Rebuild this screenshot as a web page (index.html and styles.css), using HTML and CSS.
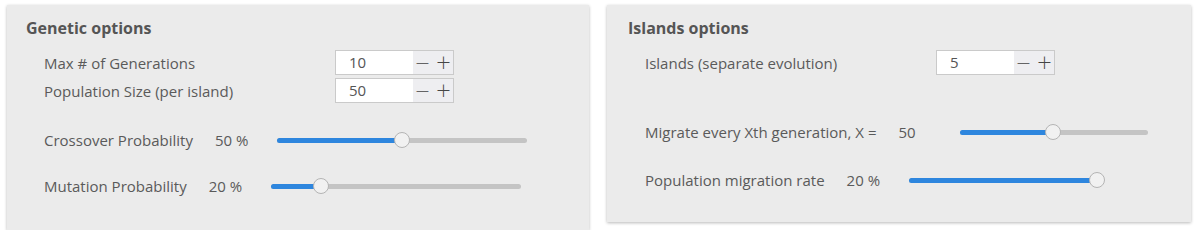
FILE: index.html
```html
<!DOCTYPE html>
<html>
<head>
<meta charset="utf-8">
<link rel="stylesheet" href="styles.css">
</head>
<body>
<div class="wrap">
  <section class="panel panel-left">
    <h2 class="title">Genetic options</h2>
    <div class="num-row">
      <span class="label">Max # of Generations</span>
      <div class="spin"><span class="spin-val">10</span><span class="spin-btns"><span class="btn">−</span><span class="btn">+</span></span></div>
    </div>
    <div class="num-row row-tight">
      <span class="label">Population Size (per island)</span>
      <div class="spin"><span class="spin-val">50</span><span class="spin-btns"><span class="btn">−</span><span class="btn">+</span></span></div>
    </div>
    <div class="slide-row sr-first-left">
      <span class="slabel">Crossover Probability</span>
      <span class="sval">50 %</span>
      <div class="slider s-wide"><div class="fill" style="width:50%"></div><div class="thumb" style="left:50%"></div></div>
    </div>
    <div class="slide-row sr-next-left">
      <span class="slabel">Mutation Probability</span>
      <span class="sval">20 %</span>
      <div class="slider s-wide"><div class="fill" style="width:20%"></div><div class="thumb" style="left:20%"></div></div>
    </div>
  </section>
  <section class="panel panel-right">
    <h2 class="title">Islands options</h2>
    <div class="num-row">
      <span class="label">Islands (separate evolution)</span>
      <div class="spin"><span class="spin-val">5</span><span class="spin-btns"><span class="btn">−</span><span class="btn">+</span></span></div>
    </div>
    <div class="slide-row sr-first-right">
      <span class="slabel">Migrate every Xth generation, X =</span>
      <span class="sval">50</span>
      <div class="slider s-narrow"><div class="fill" style="width:49%"></div><div class="thumb" style="left:49%"></div></div>
    </div>
    <div class="slide-row sr-next-right">
      <span class="slabel">Population migration rate</span>
      <span class="sval">20 %</span>
      <div class="slider s-narrow"><div class="fill" style="width:100%"></div><div class="thumb" style="left:100%"></div></div>
    </div>
  </section>
</div>
</body>
</html>
```
FILE: styles.css
```css
html, body {
  margin: 0;
  padding: 0;
  background: #ffffff;
}
body {
  font-family: "Open Sans", "Liberation Sans", sans-serif;
  color: #5a5a5a;
}
.wrap {
  display: flex;
  align-items: flex-start;
  gap: 18px;
  padding: 5px 7px 0 7px;
}
.panel {
  flex: 1 1 0;
  background: #ebebeb;
  box-shadow: 0 1px 3px rgba(0, 0, 0, 0.28);
  padding: 12px 19px 29px 19px;
  box-sizing: border-box;
}
.panel-right {
  padding-left: 21px;
  padding-bottom: 27px;
}
.title {
  margin: 0;
  font-size: 16px;
  line-height: 22px;
  font-weight: 700;
  color: #555555;
}
.num-row {
  display: flex;
  align-items: center;
  height: 25px;
  margin-top: 11px;
  padding-left: 18px;
}
.panel-right .num-row {
  padding-left: 17px;
}
.row-tight {
  margin-top: 3px;
}
.label {
  width: 291px;
  font-size: 15px;
  line-height: 20px;
}
.spin {
  display: flex;
  width: 119px;
  height: 25px;
  box-sizing: border-box;
  border: 1px solid #cacaca;
  background: #ffffff;
}
.spin-val {
  width: 77px;
  box-sizing: border-box;
  padding-left: 13px;
  font-size: 15px;
  line-height: 23px;
  color: #555555;
}
.spin-btns {
  flex: 1;
  display: flex;
  align-items: center;
  justify-content: center;
  gap: 5px;
  background: #eeeef1;
}
.btn {
  font-size: 19px;
  line-height: 23px;
  color: #454545;
  font-family: "DejaVu Sans", sans-serif;
  font-weight: 300;
}
.slide-row {
  display: flex;
  align-items: center;
  height: 30px;
  padding-left: 18px;
}
.panel-right .slide-row {
  padding-left: 17px;
}
.sr-first-left { margin-top: 22px; }
.sr-next-left { margin-top: 16px; }
.sr-first-right { margin-top: 42px; }
.sr-next-right { margin-top: 18px; }
.slabel {
  font-size: 15px;
  line-height: 20px;
  margin-right: 22px;
}
.sval {
  width: 62px;
  font-size: 15px;
  line-height: 20px;
}
.slider {
  position: relative;
  height: 5px;
  border-radius: 3px;
  background: #c4c4c4;
}
.s-wide { width: 250px; }
.s-narrow { width: 188px; }
.fill {
  height: 100%;
  border-radius: 3px;
  background: #2e86de;
}
.thumb {
  position: absolute;
  top: 50%;
  width: 16px;
  height: 16px;
  margin-left: -8px;
  margin-top: -8px;
  box-sizing: border-box;
  border-radius: 50%;
  background: #f1f1f1;
  border: 1px solid #b4b4b4;
}
```
